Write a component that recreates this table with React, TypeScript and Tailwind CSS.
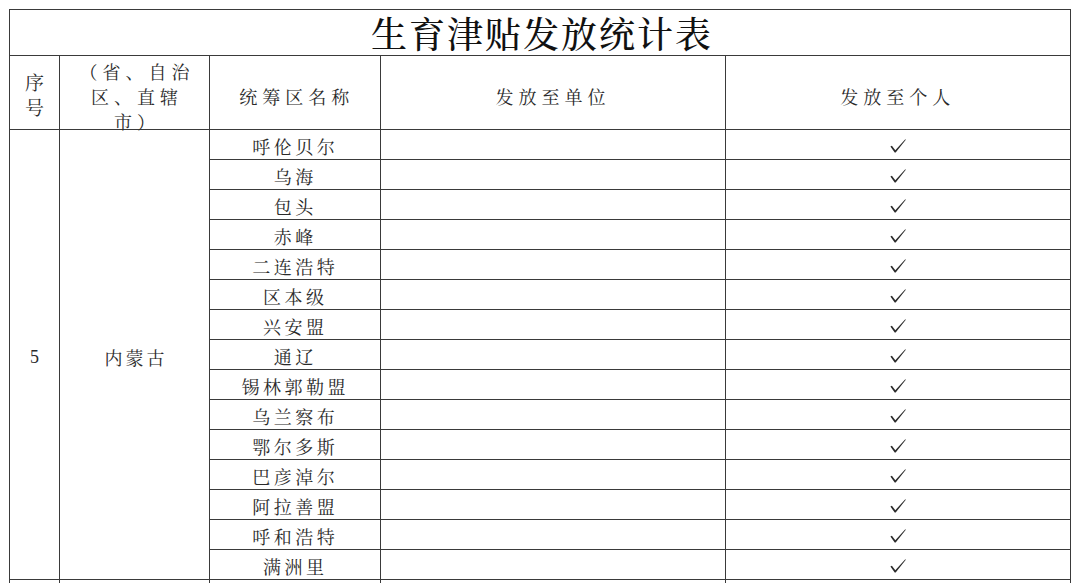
import React from 'react';

const cjk = '"Noto Serif CJK SC", "Noto Sans CJK SC", serif';

const regions = [
  '呼伦贝尔',
  '乌海',
  '包头',
  '赤峰',
  '二连浩特',
  '区本级',
  '兴安盟',
  '通辽',
  '锡林郭勒盟',
  '乌兰察布',
  '鄂尔多斯',
  '巴彦淖尔',
  '阿拉善盟',
  '呼和浩特',
  '满洲里',
];

const Check: React.FC = () => (
  <svg width="16" height="14" viewBox="0 0 16 14" className="block">
    <path
      d="M0.4 7.6 L1.9 6.7 L5.3 11.2 L15.3 0.2 L15.8 0.7 L5.7 13.6 L4.7 13.6 Z"
      fill="#2b2b2b"
    />
  </svg>
);

const cell = 'border-[1.5px] border-[#3a3a3a] p-0 text-center align-middle';

const App: React.FC = () => {
  return (
    <div className="w-[1080px] h-[583px] overflow-hidden bg-white pl-[9px] pt-[9px]">
      <table
        className="table-fixed border-collapse w-[1062px] text-[#2a2a2a]"
        style={{ fontFamily: cjk }}
      >
        <colgroup>
          <col className="w-[50px]" />
          <col className="w-[150px]" />
          <col className="w-[171px]" />
          <col className="w-[344px]" />
          <col className="w-[345px]" />
        </colgroup>
        <tbody>
          {/* Title */}
          <tr>
            <td colSpan={5} className={`${cell} h-[46px]`}>
              <div className="h-[44px] text-[36px] leading-[44px] tracking-[2px] text-[#111] font-medium pl-[4px] mt-[1px]">
                生育津贴发放统计表
              </div>
            </td>
          </tr>

          {/* Header */}
          <tr>
            <td className={`${cell} h-[74px]`}>
              <div className="h-[50px] text-[19px] leading-[25px] mt-[2px]">
                序<br />号
              </div>
            </td>
            <td className={cell}>
              <div className="h-[66px] text-[18px] leading-[25px] tracking-[5px] pl-[5px] -mt-[1px]">
                （省、自治<br />区、直辖<br />市）
              </div>
            </td>
            <td className={cell}>
              <div className="text-[18px] leading-[26px] tracking-[5px] pt-[6px] pl-[3px]">统筹区名称</div>
            </td>
            <td className={cell}>
              <div className="text-[18px] leading-[26px] tracking-[5px] pt-[6px]">发放至单位</div>
            </td>
            <td className={cell}>
              <div className="text-[18px] leading-[26px] tracking-[5px] pt-[6px]">发放至个人</div>
            </td>
          </tr>

          {/* Data rows */}
          {regions.map((name, i) => (
            <tr key={name}>
              {i === 0 && (
                <>
                  <td
                    rowSpan={regions.length}
                    className={`${cell} text-[18px] pt-[6px]`}
                    style={{ fontFamily: '"Liberation Serif", serif' }}
                  >
                    5
                  </td>
                  <td rowSpan={regions.length} className={`${cell} pt-[6px]`}>
                    <span className="text-[18px] tracking-[3px] pl-[3px]">内蒙古</span>
                  </td>
                </>
              )}
              <td className={`${cell} h-[30px]`}>
                <div className="h-[26px] text-[18px] leading-[26px] tracking-[3.5px] mt-[2px]">{name}</div>
              </td>
              <td className={cell}></td>
              <td className={cell}>
                <div className="flex justify-center items-center h-[26px] mt-[2px]">
                  <Check />
                </div>
              </td>
            </tr>
          ))}

          {/* Next row, cut off by the page edge */}
          <tr>
            <td className={`${cell} h-[30px]`}></td>
            <td className={cell}></td>
            <td className={cell}></td>
            <td className={cell}></td>
            <td className={cell}></td>
          </tr>
        </tbody>
      </table>
    </div>
  );
};

export default App;
